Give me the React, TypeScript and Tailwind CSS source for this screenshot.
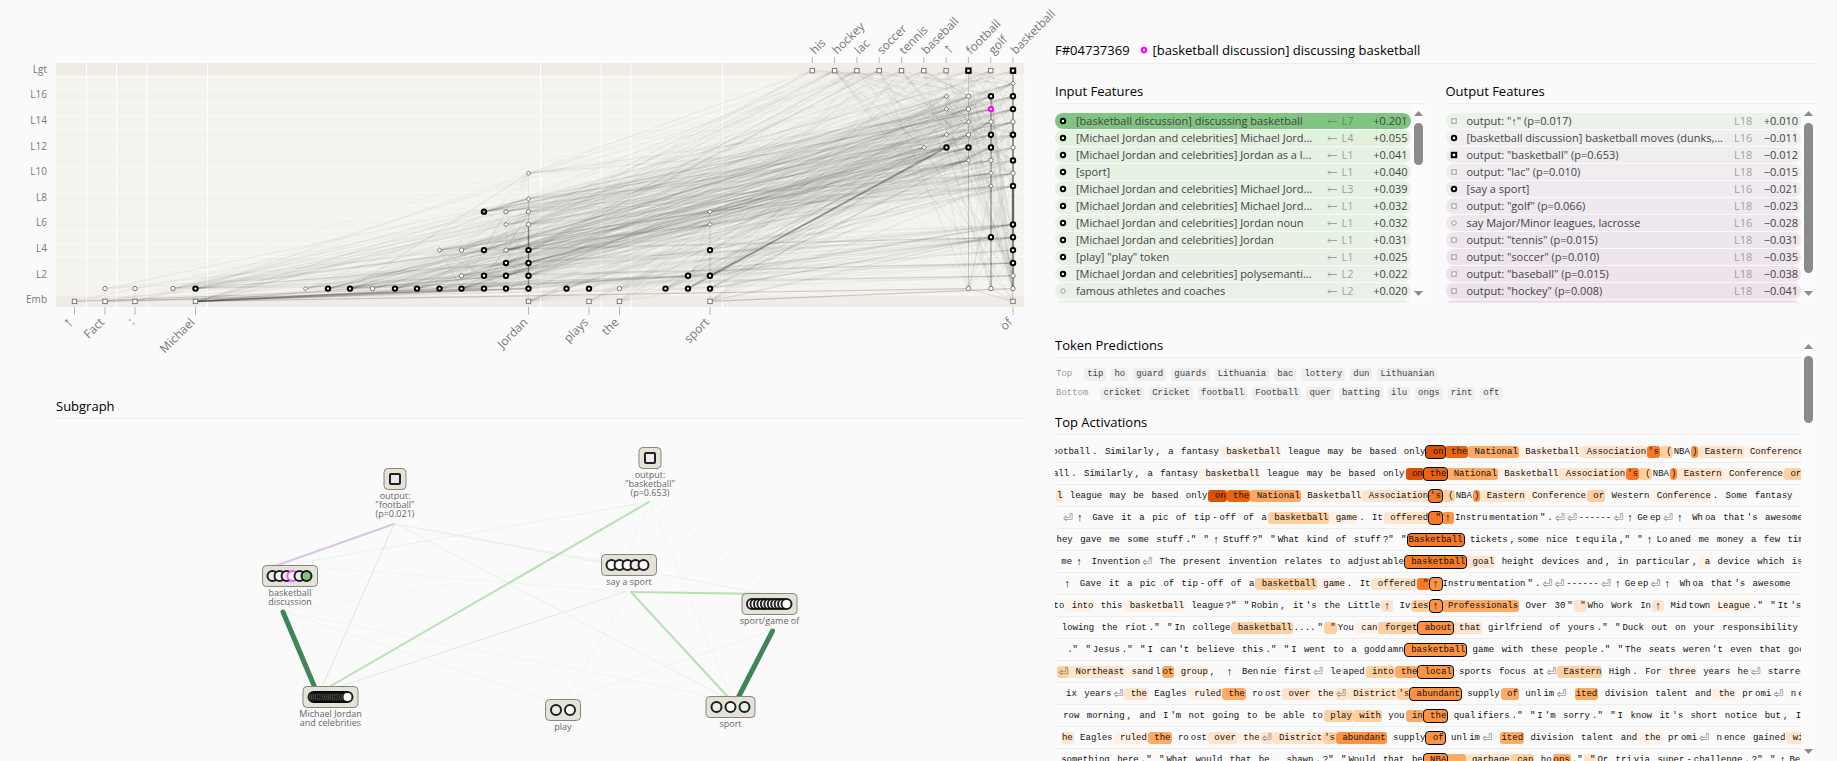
import React from "react";
import clsx from "clsx";

type Shape = "circle" | "diamond" | "square";
type Variant = "open" | "pinned" | "selected" | "hovered";

interface GraphNode {
  x: number;
  layer: number;
  ctx: number;
  shape: Shape;
  variant: Variant;
}

const CHART = { left: 56, right: 1025, top: 63, bottom: 307 };
const LAYER_STEP = 12.82;
const layerY = (layer: number) => 301.4 - layer * LAYER_STEP;

const contexts = [
  { label: "↑", x: 74.5, end: 86.5 },
  { label: "Fact", x: 105, end: 116.5 },
  { label: ":", x: 135, end: 147 },
  { label: "Michael", x: 195.5, end: 207.5 },
  { label: "Jordan", x: 528.5, end: 540.5 },
  { label: "plays", x: 589, end: 601 },
  { label: "the", x: 619.5, end: 631 },
  { label: "sport", x: 710, end: 722.5 },
  { label: "of", x: 1013, end: 1025 },
];

const logits = [
  "his",
  "hockey",
  "lac",
  "soccer",
  "tennis",
  "baseball",
  "↑",
  "football",
  "golf",
  "basketball",
];

/** [x, context index, "layer + kind" list], o = open, p = pinned, d = diamond */
const columns: [number, number, string][] = [
  [105, 1, "1o"],
  [135, 2, "1o"],
  [173, 3, "1o"],
  [195.5, 3, "1p"],
  [305.5, 4, "1d"],
  [328, 4, "1p"],
  [350, 4, "1p"],
  [372.5, 4, "1o"],
  [395, 4, "1p"],
  [417, 4, "1p"],
  [439.5, 4, "1p 4d"],
  [461.5, 4, "1p 2o 4o"],
  [484, 4, "1p 2p 4p 7h"],
  [506, 4, "1p 2p 3p 4o 6d 7o"],
  [528.5, 4, "1p 2p 3p 4p 6o 7o 8d 10d"],
  [566.5, 5, "1p"],
  [589, 5, "1p"],
  [619.5, 6, "1o"],
  [665.5, 7, "1p"],
  [688, 7, "1p 2p"],
  [710, 7, "1p 2p 4p 6d 7d"],
  [924, 8, "12d"],
  [946.5, 8, "12p 13d 15d 16d"],
  [968.5, 8, "1o 11d 12p 13o 14d 15o 16o"],
  [991, 8, "1o 5p 9d 10d 11o 12p 13p 14o 15s 16p"],
  [1013, 8, "1o 2o 3p 4p 5p 6p 9p 10o 11p 12o 13p 14o 15p 16p 17d"],
];

const variants: Record<string, Variant> = {
  o: "open",
  d: "open",
  p: "pinned",
  s: "selected",
  h: "hovered",
};

const nodes: GraphNode[] = [
  ...contexts.map((c, i): GraphNode => ({
    x: c.x,
    layer: 0,
    ctx: i,
    shape: "square",
    variant: "open",
  })),
  ...columns.flatMap(([x, ctx, items]) =>
    items.split(" ").map((item): GraphNode => {
      const kind = item.slice(-1);
      return {
        x,
        ctx,
        layer: parseInt(item, 10),
        shape: kind === "d" ? "diamond" : "circle",
        variant: variants[kind],
      };
    })
  ),
  ...logits.map((label, i): GraphNode => ({
    x: 812.3 + i * 22.3,
    layer: 18,
    ctx: 8,
    shape: "square",
    variant: label === "football" || label === "basketball" ? "pinned" : "open",
  })),
];

const seededRandom = (seed: number) => () => {
  seed = (seed * 1664525 + 1013904223) % 4294967296;
  return seed / 4294967296;
};

const rand = seededRandom(7);

const links = nodes.flatMap((s) =>
  nodes
    .filter((t) => t.layer > s.layer && t.ctx >= s.ctx)
    .map((t) => {
      const strength = Math.pow(rand(), 5);
      const faint = s.ctx < 3 || (t.layer === 18 && s.ctx < 8);
      return { s, t, w: 0.8 + strength * 0.8, o: (0.008 + strength * 0.045) * (faint ? 0.7 : 1) };
    })
    .filter(({ s }) => rand() > (s.ctx < 3 ? 0.7 : 0.2))
);

/** x1, layer1, x2, layer2, width, opacity */
const strongLinks = [
  [195.5, 0, 484, 1, 1.5, 0.3],
  [195.5, 0, 528.5, 1, 1.5, 0.25],
  [195.5, 0, 439.5, 1, 1.2, 0.25],
  [195.5, 0, 506, 2, 1.2, 0.15],
  [74.5, 0, 417, 1, 1, 0.15],
  [105, 0, 528.5, 1, 1, 0.15],
  [105, 1, 528.5, 8, 1, 0.06],
  [195.5, 1, 484, 4, 1.2, 0.12],
  [195.5, 1, 506, 3, 1, 0.12],
  [328, 1, 484, 4, 1.2, 0.12],
  [350, 1, 528.5, 4, 1.2, 0.1],
  [395, 1, 528.5, 3, 1.2, 0.12],
  [484, 7, 991, 15, 1.4, 0.15],
  [484, 7, 528.5, 8, 1.2, 0.25],
  [528.5, 8, 991, 13, 1, 0.1],
  [528.5, 10, 812.3, 18, 1, 0.05],
  [528.5, 4, 946.5, 12, 1.4, 0.1],
  [528.5, 3, 968.5, 12, 1.4, 0.1],
  [528.5, 3, 946.5, 12, 1.4, 0.08],
  [528.5, 1, 528.5, 6, 1.4, 0.35],
  [688, 1, 946.5, 12, 1.6, 0.22],
  [710, 2, 946.5, 12, 1.4, 0.2],
  [710, 2, 991, 14, 1.2, 0.14],
  [710, 1, 991, 12, 1, 0.1],
  [710, 1, 991, 5, 1.2, 0.12],
  [710, 2, 1013, 6, 1.2, 0.12],
  [710, 4, 1013, 9, 1.2, 0.1],
  [710, 0, 991, 5, 1, 0.1],
  [528.5, 1, 1013, 5, 1.2, 0.1],
  [195.5, 0, 968.5, 1, 1.2, 0.2],
  [710, 0, 1013, 1, 1.2, 0.2],
  [1013, 1, 1013, 9, 2.4, 0.3],
  [1013, 6, 1013, 9, 2.4, 0.3],
  [1013, 9, 1013, 18, 1.6, 0.3],
  [991, 1, 991, 16, 1.2, 0.35],
  [1013, 0, 991, 1, 1, 0.12],
  [1013, 0, 968.5, 1, 1, 0.12],
  [968.5, 1, 968.5, 18, 1, 0.12],
];

const NodeMark = ({ x, y, shape, variant }: { x: number; y: number; shape: Shape; variant: Variant }) => {
  const pinned = variant !== "open";
  const stroke = variant === "selected" ? "#ff00ff" : pinned ? "#000" : "#777";
  const fill = variant === "hovered" ? "#7fc97f" : "#fff";
  const common = { stroke, fill, strokeWidth: pinned ? 2 : 1 };
  if (shape === "square") return <rect x={x - 2.2} y={y - 2.2} width={4.4} height={4.4} {...common} />;
  if (shape === "diamond")
    return <path d={`M${x} ${y - 2.3}l2.3 2.3l-2.3 2.3l-2.3 -2.3z`} {...common} fill="#f4f4f0" />;
  return <circle cx={x} cy={y} r={2.2} {...common} />;
};

const LinkGraph = () => (
  <svg
    viewBox="0 0 1025 370"
    className="block w-full overflow-visible"
    fontFamily='"Open Sans", sans-serif'
    role="img"
    aria-label="Attribution graph"
  >
    <rect x={CHART.left} y={CHART.top} width={969} height={244} fill="#f4f3ee" />
    <rect x={CHART.left} y={63} width={969} height={12} fill="#f0ede6" />
    <rect x={CHART.left} y={295} width={969} height={12} fill="#f0ede6" />
    {Array.from({ length: 18 }, (_, i) => (
      <path key={i} d={`M56 ${layerY(i + 0.5)}H1025`} stroke="#fff" strokeOpacity={0.5} />
    ))}
    {contexts.map((c) => (
      <path key={c.x} d={`M${c.end} 63V307`} stroke="#fff" />
    ))}

    {links.map(({ s, t, w, o }, i) => (
      <path
        key={i}
        d={`M${s.x} ${layerY(s.layer)}L${t.x} ${layerY(t.layer)}`}
        stroke="#000"
        strokeWidth={w}
        strokeOpacity={o}
      />
    ))}
    {strongLinks.map(([x1, l1, x2, l2, w, o], i) => (
      <path
        key={i}
        d={`M${x1} ${layerY(l1)}L${x2} ${layerY(l2)}`}
        stroke="#222"
        strokeWidth={w}
        strokeOpacity={o}
      />
    ))}

    {nodes.map((n, i) => (
      <NodeMark key={i} x={n.x} y={layerY(n.layer)} shape={n.shape} variant={n.variant} />
    ))}

    <g fill="#777" fontSize={10} textAnchor="end">
      {["Emb", "L2", "L4", "L6", "L8", "L10", "L12", "L14", "L16", "Lgt"].map((label, i) => (
        <text key={label} x={47} y={layerY(i * 2) + 2}>
          {label}
        </text>
      ))}
    </g>
    <g fill="#777" fontSize={12}>
      {contexts.map((c) => (
        <g key={c.x}>
          <path d={`M${c.x} 307v8`} stroke="#bbb8b0" />
          <text
            transform={`translate(${c.x} 323) rotate(-45)`}
            textAnchor="end"
            fontSize={c.label === "↑" ? 16 : 12}
          >
            {c.label}
          </text>
        </g>
      ))}
      {logits.map((label, i) => (
        <g key={label}>
          <path d={`M${812.3 + i * 22.3} 57v6`} stroke="#bbb8b0" />
          <text
            transform={`translate(${815 + i * 22.3} 55) rotate(-45)`}
            fontSize={label === "↑" ? 16 : 12}
          >
            {label}
          </text>
        </g>
      ))}
    </g>
  </svg>
);

interface Supernode {
  label: string[];
  x: number;
  y: number;
  width: number;
  dots: number[];
  fills?: Record<number, string>;
  selected?: number;
  square?: boolean;
}

const spread = (from: number, to: number, count: number) =>
  Array.from({ length: count }, (_, i) => from + ((to - from) * i) / (count - 1));

const supernodes: Supernode[] = [
  { label: ["output:", '"football"', "(p=0.021)"], x: 395, y: 60, width: 22, dots: [395], fills: { 0: "#efe3ef" }, square: true },
  { label: ["output:", '"basketball"', "(p=0.653)"], x: 650, y: 39, width: 22, dots: [650], fills: { 0: "#f0ecf1" }, square: true },
  {
    label: ["basketball", "discussion"],
    x: 290,
    y: 157,
    width: 55,
    dots: [272.5, 279.5, 286.5, 292.5, 299.5, 306.5],
    fills: { 0: "#efeaf0", 2: "#efe3ef", 4: "#f0eaf0", 5: "#7fc47f" },
    selected: 3,
  },
  { label: ["say a sport"], x: 629, y: 146, width: 55, dots: spread(611.5, 643.5, 5), fills: { 3: "#efeaf0" } },
  { label: ["sport/game of"], x: 769.5, y: 185, width: 55, dots: spread(752, 786.5, 11) },
  { label: ["Michael Jordan", "and celebrities"], x: 330.5, y: 278, width: 55, dots: spread(313.5, 347.5, 19) },
  { label: ["play"], x: 563, y: 291, width: 35, dots: [556, 570], fills: { 0: "#e8f0e6" } },
  { label: ["sport"], x: 730.5, y: 288, width: 49, dots: [716.5, 730.5, 744.5], fills: { 0: "#e6f1e4", 2: "#e2f2df" } },
];

/** x1, y1, x2, y2, colour, width */
const subgraphLinks: [number, number, number, number, string, number][] = [
  [650, 83, 731, 278, "#f3f4f2", 1],
  [649, 83, 627, 136, "#f3f4f2", 1],
  [652, 83, 775, 175, "#f1f4f0", 1],
  [285, 193, 705, 276, "#f3f4f2", 1],
  [285, 193, 546, 280, "#f3f4f2", 1],
  [628, 173, 566, 280, "#f2f4f1", 1],
  [770, 212, 570, 280, "#f0f4ee", 1],
  [300, 147, 625, 173, "#f3f4f2", 1],
  [285, 193, 625, 136, "#f5f5f4", 1],
  [649, 83, 300, 144, "#e9f5e7", 1],
  [396, 105, 722, 277, "#e6f4e3", 1],
  [396, 105, 627, 147, "#e6f4e3", 1],
  [396, 105, 765, 175, "#e6f4e3", 1],
  [625, 173, 335, 269, "#daf0d7", 1],
  [394, 105, 275, 147, "#d8c6e4", 2],
  [394, 105, 322, 268, "#d4edd0", 1],
  [649, 83, 329, 268, "#b8e0b4", 2],
  [631, 173, 728, 278, "#b8e0b4", 2],
  [631, 173, 765, 175, "#b8e0b4", 2],
  [283, 193, 315, 269, "#3f8559", 5],
  [772.5, 212, 738, 279, "#3f8559", 5],
];

const Subgraph = () => (
  <svg
    viewBox="0 0 1025 342"
    className="block w-full"
    fontFamily='"Open Sans", sans-serif'
    role="img"
    aria-label="Subgraph"
  >
    {subgraphLinks.map(([x1, y1, x2, y2, stroke, width], i) => (
      <line key={i} x1={x1} y1={y1} x2={x2} y2={y2} stroke={stroke} strokeWidth={width} strokeLinecap="round" />
    ))}
    {supernodes.map((n) => (
      <g key={n.label.join(" ")}>
        <rect
          x={n.x - n.width / 2}
          y={n.y - 10.5}
          width={n.width}
          height={21}
          rx={4}
          fill="#e4e2d9"
          stroke="#87857c"
        />
        {n.dots.map((cx, i) => {
          const fill = n.fills?.[i] ?? "#fff";
          return n.square ? (
            <rect key={i} x={cx - 5} y={n.y - 5} width={10} height={10} rx={1} fill={fill} stroke="#222" strokeWidth={2} />
          ) : (
            <circle
              key={i}
              cx={cx}
              cy={n.y}
              r={5}
              fill={fill}
              stroke={n.selected === i ? "#f03df0" : "#000"}
              strokeWidth={2}
              strokeOpacity={0.87}
            />
          );
        })}
        <text
          fill="#666"
          fontSize={9}
          textAnchor="middle"
          stroke="#fafafa"
          strokeWidth={3}
          strokeLinejoin="round"
          paintOrder="stroke"
        >
          {n.label.map((line, i) => (
            <tspan key={line} x={n.x} y={n.y + 20 + i * 9}>
              {line}
            </tspan>
          ))}
        </text>
      </g>
    ))}
  </svg>
);

const ScrollBar = ({ thumb }: { thumb: string }) => (
  <div className="flex w-[15px] shrink-0 flex-col items-center bg-[#fcfcfc] py-[7px]" aria-hidden>
    <svg viewBox="0 0 9 5" className="w-[9px] shrink-0 fill-[#8b8b8b]">
      <path d="M4.5 0L9 5H0z" />
    </svg>
    <div className={clsx("mt-[7px] w-[9px] rounded-full bg-[#8b8b8b]", thumb)} />
    <svg viewBox="0 0 9 5" className="mt-auto w-[9px] shrink-0 fill-[#8b8b8b]">
      <path d="M4.5 5L9 0H0z" />
    </svg>
  </div>
);

interface Feature {
  name: string;
  layer: string;
  value: string;
  bg: string;
  shape?: Shape;
  variant?: Variant;
  incoming?: boolean;
}

const MJ = "[Michael Jordan and celebrities]";

const inputFeatures: Feature[] = [
  { name: "[basketball discussion] discussing basketball", layer: "L7", value: "+0.201", bg: "bg-[#7fc480]" },
  { name: `${MJ} Michael Jord...`, layer: "L4", value: "+0.055", bg: "bg-[#e0f1dd]" },
  { name: `${MJ} Jordan as a l...`, layer: "L1", value: "+0.041", bg: "bg-[#e5f1e2]" },
  { name: "[sport]", layer: "L1", value: "+0.040", bg: "bg-[#e5f1e3]" },
  { name: `${MJ} Michael Jord...`, layer: "L3", value: "+0.039", bg: "bg-[#e5f1e3]" },
  { name: `${MJ} Michael Jord...`, layer: "L1", value: "+0.032", bg: "bg-[#e7f2e5]" },
  { name: `${MJ} Jordan noun`, layer: "L1", value: "+0.032", bg: "bg-[#e7f2e5]" },
  { name: `${MJ} Jordan`, layer: "L1", value: "+0.031", bg: "bg-[#e7f2e5]" },
  { name: '[play] "play" token', layer: "L1", value: "+0.025", bg: "bg-[#e9f1e7]" },
  { name: `${MJ} polysemanti...`, layer: "L2", value: "+0.022", bg: "bg-[#eaf1e8]" },
  { name: "famous athletes and coaches", layer: "L2", value: "+0.020", bg: "bg-[#eaf1e9]", variant: "open" },
  { name: "", layer: "", value: "", bg: "bg-[#ebf0ea]" },
];

const outputFeatures: Feature[] = [
  { name: 'output: "↑" (p=0.017)', layer: "L18", value: "+0.010", bg: "bg-[#ebf2ea]", shape: "square", variant: "open" },
  { name: "[basketball discussion] basketball moves (dunks,...", layer: "L16", value: "−0.011", bg: "bg-[#f0eef0]" },
  { name: 'output: "basketball" (p=0.653)', layer: "L18", value: "−0.012", bg: "bg-[#f0edf0]", shape: "square" },
  { name: 'output: "lac" (p=0.010)', layer: "L18", value: "−0.015", bg: "bg-[#f0ecf0]", shape: "square", variant: "open" },
  { name: "[say a sport]", layer: "L16", value: "−0.021", bg: "bg-[#efeaef]" },
  { name: 'output: "golf" (p=0.066)', layer: "L18", value: "−0.023", bg: "bg-[#efe9ef]", shape: "square", variant: "open" },
  { name: "say Major/Minor leagues, lacrosse", layer: "L16", value: "−0.028", bg: "bg-[#efe7ee]", variant: "open" },
  { name: 'output: "tennis" (p=0.015)', layer: "L18", value: "−0.031", bg: "bg-[#eee6ee]", shape: "square", variant: "open" },
  { name: 'output: "soccer" (p=0.010)', layer: "L18", value: "−0.035", bg: "bg-[#eee4ed]", shape: "square", variant: "open" },
  { name: 'output: "baseball" (p=0.015)', layer: "L18", value: "−0.038", bg: "bg-[#ede3ec]", shape: "square", variant: "open" },
  { name: 'output: "hockey" (p=0.008)', layer: "L18", value: "−0.041", bg: "bg-[#ede2ec]", shape: "square", variant: "open" },
  { name: "", layer: "", value: "", bg: "bg-[#ede2ec]" },
];

const FeatureRow = ({ name, layer, value, bg, shape = "circle", variant = "pinned", incoming }: Feature) => (
  <li>
    <button
      type="button"
      className={clsx("flex h-4 w-full items-center rounded-full pr-[3px] pl-1 text-left text-[11px] leading-4 text-[#444]", bg)}
    >
      {name && (
        <>
          <svg viewBox="0 0 8 8" className={clsx("size-2 shrink-0", variant === "open" && "opacity-70")}>
            <NodeMark x={4} y={4} shape={shape} variant={variant} />
          </svg>
          <span className="ml-[9px] min-w-0 flex-1 whitespace-nowrap">{name}</span>
          {incoming && (
            <svg viewBox="0 0 10 5" className="ml-[6px] w-[10px] shrink-0 fill-none stroke-[#555] opacity-50">
              <path d="M10 2.5H1M3 .5L1 2.5L3 4.5" />
            </svg>
          )}
          <span className={clsx("ml-[5px] shrink-0 text-[#444] opacity-45", incoming ? "w-7" : "w-[26px]")}>
            {layer}
          </span>
          <span className="w-[38px] shrink-0 text-right">{value}</span>
        </>
      )}
    </button>
  </li>
);

interface FeaturePanelProps {
  title: string;
  features: Feature[];
  thumb: string;
  incoming?: boolean;
}

const SectionTitle = ({ children }: { children: React.ReactNode }) => (
  <h2 className="border-b border-[#eee] pt-px pb-[2px] text-[13px] leading-5 text-black">{children}</h2>
);

const FeaturePanel = ({ title, features, thumb, incoming }: FeaturePanelProps) => (
  <section className="min-w-0">
    <SectionTitle>{title}</SectionTitle>
    <div className="flex h-[199px]">
      <ul className="flex min-w-0 flex-1 flex-col gap-px overflow-hidden pt-[9px]">
        {features.map((f, i) => (
          <FeatureRow key={i} {...f} incoming={incoming} />
        ))}
      </ul>
      <ScrollBar thumb={thumb} />
    </div>
  </section>
);

const predictions = [
  { label: "Top", tokens: ["tip", "ho", "guard", "guards", "Lithuania", "bac", "lottery", "dun", "Lithuanian"] },
  {
    label: "Bottom",
    tokens: ["cricket", "Cricket", "football", "Football", "quer", "batting", "ilu", "ongs", "rint", "oft"],
  },
];

const heat = [
  "",
  "bg-[#fff1e5]",
  "bg-[#fee4cd]",
  "bg-[#fdd0a2]",
  "bg-[#fdaa65]",
  "bg-[#fd9243]",
  "bg-[#f77925]",
  "bg-[#eb6411]",
  "bg-[#dc5004]",
];

/** [before, peak, after]; tokens split by "|", a "n~" prefix is the activation level */
const activations: [string, string, string][] = [
  [
    "ootball|.| Similarly|,| a| fantasy|1~ basketball| league| may| be| based| only",
    "8~ on",
    "7~ the|4~ National|1~ Basketball|2~ Association|6~'s|3~ (|NBA|5~)|2~ Eastern|1~ Conference",
  ],
  [
    "all|.| Similarly|,| a| fantasy|1~ basketball| league| may| be| based| only|8~ on",
    "7~ the",
    "4~ National|1~ Basketball|2~ Association|6~'s|3~ (|NBA|5~)|2~ Eastern|1~ Conference|3~ or",
  ],
  [
    "2~l| league| may| be| based| only|8~ on|7~ the|4~ National|1~ Basketball|2~ Association",
    "6~'s",
    "3~ (|NBA|5~)|2~ Eastern|1~ Conference|3~ or| Western|1~ Conference|.| Some| fantasy",
  ],
  [
    "⏎|↑| Gave| it| a| pic| of| tip|-|off| of| a|3~ basketball|1~ game|.| It|2~ offered",
    '6~ "',
    '5~↑|Instru|mentation|"|.|⏎|⏎|------|⏎|↑|Ge|ep|⏎|↑| Wh|oa| that|\'s| awesome',
  ],
  [
    'hey| gave| me| some| stuff|."| "|↑|Stuff|?"| "|What| kind| of| stuff|?"| "',
    "6~Basketball",
    ' tickets|,|some| nice| t|equ|ila|,"| "|↑|Lo|aned| me| money| a| few| times',
  ],
  [
    "me|↑| Invention|⏎| The| present| invention| relates| to| adjust|able",
    "6~ basketball",
    "2~ goal| height| devices| and|,| in| particular|,|1~ a| device| which| is",
  ],
  [
    "↑| Gave| it| a| pic| of| tip|-|off| of| a|3~ basketball|1~ game|.| It|2~ offered|6~ \"",
    "5~↑",
    'Instru|mentation|"|.|⏎|⏎|------|⏎|↑|Ge|ep|⏎|↑| Wh|oa| that|\'s| awesome',
  ],
  [
    'to|1~ into| this|1~ basketball| league|?"| "|Robin|,| it|\'s| the| Little|2~↑| Iv|3~ies',
    "5~↑",
    '4~ Professionals| Over| 30|"|2~ "|Who| Work| In|2~↑| Mid|town|1~ League|."| "|It|\'s',
  ],
  [
    'lowing| the| riot|."| "|In| college|3~ basketball|....|"|3~ "|You|1~ can|3~ forget',
    "5~ about",
    '2~ that| girlfriend| of| yours|."| "|Duck| out| on| your| responsibility',
  ],
  [
    '."| "|Jesus|."| "|I| can|\'t| believe| this|."| "|I| went| to| a| godd|amn',
    "5~ basketball",
    ' game| with| these| people|."| "|The| seats| weren|\'t| even| that| good',
  ],
  [
    "3~⏎|2~ Northeast|1~ sand|l|4~ot|1~ group|,| |↑| Ben|nie| first|⏎| le|aped|3~ into|4~ the",
    "5~ local",
    " sports| focus| at|⏎|3~ Eastern| High|.| For|1~ three| years| he|⏎| starred",
  ],
  [
    "ix| years|⏎|2~ the| Eagles|1~ ruled|4~ the| ro|ost|2~ over|1~ the|2~⏎|2~ District|3~'s",
    "5~ abundant",
    " supply|4~ of| unl|im|⏎| |4~ited| division| talent| and|1~ the| pr|omi|⏎| n|ence",
  ],
  [
    "row| morning|,| and| I|'m| not| going| to| be| able| to|3~ play|3~ with| you|4~ in",
    "5~ the",
    ' qual|ifiers|."| "|I|\'m| sorry|."| "|I| know| it|\'s| short| notice| but|,| I',
  ],
  [
    "2~he| Eagles|1~ ruled|4~ the| ro|ost|2~ over|1~ the|2~⏎|2~ District|3~'s|5~ abundant| supply",
    "5~ of",
    " unl|im|⏎| |4~ited| division| talent| and|1~ the| pr|omi|⏎| n|ence| gained|2~ with",
  ],
  [
    'something| here|."| "|What| would| that| be|,| |shawn|.|?"| "|Would| that| be',
    "5~ NBA",
    '4~   |2~ garbage|3~ can| ho|4~ops|."|2~ "|Or| tri|via| super|-|challenge|.|?"| "|↑|Be',
  ],
];

const Token = ({ raw, peak }: { raw: string; peak?: boolean }) => {
  const match = /^(\d)~(.*)$/.exec(raw);
  const text = match ? match[2] : raw;
  return (
    <span
      className={clsx(
        "h-3 shrink-0 rounded-[3px] px-px",
        match && heat[Number(match[1])],
        text === "↑" && "w-3 text-center text-[11px]",
        text === "⏎" && "w-3 text-center font-['DejaVu_Sans',sans-serif] text-[12px] text-[#777]",
        peak && "relative outline outline-black"
      )}
    >
      {text}
    </span>
  );
};

const ActivationRow = ({ row: [before, peak, after] }: { row: [string, string, string] }) => (
  <div className="w-full overflow-hidden border-b border-[#eee]">
    <div className="flex h-[21px] w-[calc(100%+15px)] items-center font-['Liberation_Mono','DejaVu_Sans_Mono',monospace] text-[9px] leading-3 whitespace-pre text-[#111]">
      <div className="flex min-w-0 flex-1 justify-end overflow-hidden">
        {before.split("|").map((t, i) => (
          <Token key={i} raw={t} />
        ))}
      </div>
      <Token raw={peak} peak />
      <div className="flex min-w-0 flex-1 overflow-hidden">
        {after.split("|").map((t, i) => (
          <Token key={i} raw={t} />
        ))}
      </div>
    </div>
  </div>
);

const App: React.FC = () => (
  <main className="grid h-screen grid-cols-[1025fr_812fr] overflow-hidden bg-[#fafafa] font-['Open_Sans',sans-serif] text-black">
    <div className="min-w-0">
      <LinkGraph />
      <div className="ml-14 pt-[25px]">
        <SectionTitle>Subgraph</SectionTitle>
      </div>
      <Subgraph />
    </div>

    <div className="flex h-screen min-w-0 flex-col pt-10 pr-[21px] pl-[30px]">
      <h1 className="flex items-center border-b border-[#eee] pb-[3px] text-[13px] leading-5">
        <span>F#04737369</span>
        <svg viewBox="0 0 8 8" className="mr-[5px] ml-[10px] size-2">
          <NodeMark x={4} y={4} shape="circle" variant="selected" />
        </svg>
        <span>[basketball discussion] discussing basketball</span>
      </h1>

      <div className="mt-4 grid grid-cols-2 gap-5">
        <FeaturePanel title="Input Features" features={inputFeatures} thumb="h-[42px]" incoming />
        <FeaturePanel title="Output Features" features={outputFeatures} thumb="h-[150px]" />
      </div>

      <div className="mt-[34px] flex min-h-0 flex-1">
        <div className="min-w-0 flex-1 overflow-hidden">
          <div className="-mt-[3px]">
            <SectionTitle>Token Predictions</SectionTitle>
          </div>
          <div className="mt-[10px] flex flex-col gap-[6px] font-['Liberation_Mono','DejaVu_Sans_Mono',monospace] text-[9px] leading-[13px]">
            {predictions.map(({ label, tokens }) => (
              <div key={label} className="flex gap-[5px]">
                <span className="mr-[7px] pl-px text-[#999]">{label}</span>
                {tokens.map((t) => (
                  <span key={t} className="rounded-[3px] bg-[#eee] px-[3px] text-[#444]">
                    {t}
                  </span>
                ))}
              </div>
            ))}
          </div>
          <div className="mt-[11px] mb-[6px]">
            <SectionTitle>Top Activations</SectionTitle>
          </div>
          {activations.map((row, i) => (
            <ActivationRow key={i} row={row} />
          ))}
        </div>
        <ScrollBar thumb="h-[67px]" />
      </div>
    </div>
  </main>
);

export default App;
